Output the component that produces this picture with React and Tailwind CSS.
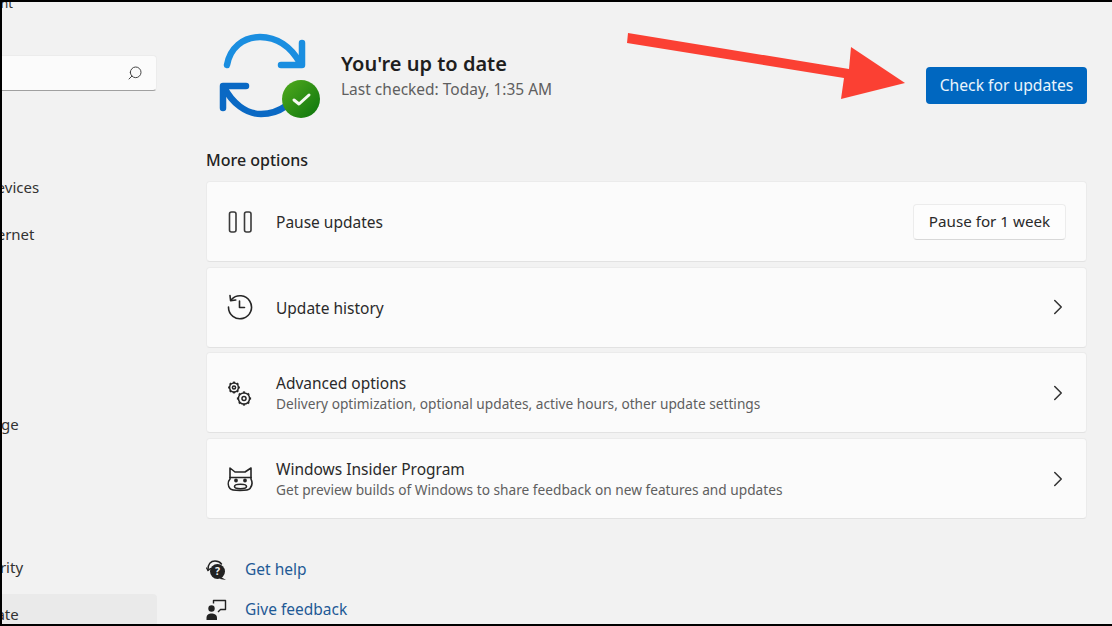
import { ChevronRight, Search } from "lucide-react";

const navItems = [
  "Bluetooth & devices",
  "Network & internet",
  "Personalization",
  "Apps",
  "Accounts",
  "Time & language",
  "Gaming",
  "Accessibility",
  "Privacy & security",
  "Windows Update",
];

const SyncIcon = () => (
  <svg width="104" height="90" viewBox="0 0 104 90" fill="none" className="shrink-0">
    <defs>
      <linearGradient id="green" x1="0" y1="0" x2="1" y2="1">
        <stop offset="0" stopColor="#52ab1e" />
        <stop offset="1" stopColor="#0b740c" />
      </linearGradient>
    </defs>
    <g stroke="#1a8ee0" strokeWidth="6.5" strokeLinecap="round" strokeLinejoin="round">
      <path d="M8 32 C11 15 24 4 41 4 C58 4 72 14 81 30" />
      <path d="M83 10 V32 H62" />
    </g>
    <g stroke="#0a69c4" strokeWidth="6.5" strokeLinecap="round" strokeLinejoin="round">
      <path d="M5 54 C13 70 27 81 42 81 C52 81 60 78 67 73" />
      <path d="M4 75 V53 H27" />
    </g>
    <circle cx="82" cy="66" r="19" fill="url(#green)" />
    <path d="M75 67 L80 71 L90 62" stroke="#f4f9f0" strokeWidth="3" strokeLinecap="round" strokeLinejoin="round" />
  </svg>
);

const PauseIcon = () => (
  <svg width="26" height="22" viewBox="0 0 26 22" fill="none" stroke="#3a3a3a" strokeWidth="1.6">
    <rect x="2.5" y="1" width="6.5" height="20" rx="2" />
    <rect x="17.5" y="1" width="6.5" height="20" rx="2" />
  </svg>
);

const HistoryIcon = () => (
  <svg width="26" height="26" viewBox="0 0 26 26" fill="none" stroke="#262626" strokeWidth="1.6" strokeLinecap="round" strokeLinejoin="round">
    <path d="M4.5 5.5 A11.5 11.5 0 1 1 1.5 13" />
    <path d="M3 1.5 L3.6 6.6 L8.8 6" />
    <path d="M12.5 7 V13.5 H17.5" />
  </svg>
);

const Gear = ({ cx, cy, r }) => (
  <g>
    <circle cx={cx} cy={cy} r={r} />
    <circle cx={cx} cy={cy} r={r * 0.36} />
    {[0, 45, 90, 135, 180, 225, 270, 315].map((a) => (
      <line
        key={a}
        x1={cx + r * Math.cos((a * Math.PI) / 180)}
        y1={cy + r * Math.sin((a * Math.PI) / 180)}
        x2={cx + (r + 1.5) * Math.cos((a * Math.PI) / 180)}
        y2={cy + (r + 1.5) * Math.sin((a * Math.PI) / 180)}
        strokeWidth="2.2"
      />
    ))}
  </g>
);

const GearsIcon = () => (
  <svg width="26" height="30" viewBox="0 0 26 30" fill="none" stroke="#262626" strokeWidth="1.5">
    <Gear cx={7} cy={9.5} r={4.4} />
    <Gear cx={17} cy={20.5} r={5.6} />
  </svg>
);

const CatIcon = () => (
  <svg width="26" height="26" viewBox="0 0 26 26" fill="none" stroke="#262626" strokeWidth="1.6" strokeLinejoin="round" strokeLinecap="round">
    <path d="M3 2 L8 6 H18 L24 2 V13 C25.5 16 25 20 23 22.5 C21 25 5 25 3 22.5 C1 20 0.5 16 3 13 Z" />
    <path d="M3 11.5 H24" />
    <circle cx="9" cy="14.5" r="1.1" fill="#262626" />
    <circle cx="18" cy="14.5" r="1.1" fill="#262626" />
    <path d="M7.5 20.5 C7.5 17.5 19.5 17.5 19.5 20.5 C19.5 23.5 7.5 23.5 7.5 20.5 Z" />
  </svg>
);

const HelpIcon = () => (
  <svg width="22" height="22" viewBox="0 0 22 22" fill="none">
    <path d="M2 11 C1.5 5 5 2 9 2 C11.5 2 14 3 15.5 5" stroke="#222" strokeWidth="1.4" strokeLinecap="round" />
    <path d="M0.5 9 L2 11.5 L4.5 9.5" stroke="#222" strokeWidth="1.2" strokeLinecap="round" />
    <circle cx="11.5" cy="12.5" r="7.5" fill="#222" />
    <path d="M15 18 L20 21 L14 20 Z" fill="#222" />
    <text x="11.5" y="16.2" textAnchor="middle" fontSize="10.5" fontWeight="700" fill="#f3f3f3" fontFamily="'Noto Sans', sans-serif">?</text>
  </svg>
);

const FeedbackIcon = () => (
  <svg width="22" height="24" viewBox="0 0 22 24" fill="none">
    <circle cx="5.5" cy="10.5" r="3.2" fill="#222" />
    <path d="M0.5 22 V20 C0.5 16.5 3 15.5 5.5 15.5 C8 15.5 11 16.5 11 20 V22 Z" fill="#222" />
    <path d="M7.5 5.5 V2.5 H19.5 V11.5 H14.5 L12 14" stroke="#222" strokeWidth="1.4" strokeLinejoin="round" />
  </svg>
);

const Card = ({ icon, title, sub, right }) => (
  <div className="flex h-[81px] items-center rounded-[4px] border border-[#ebebeb] border-b-[#e2e2e2] bg-[#fbfbfb] pl-[20px] pr-[20px]">
    <div className="flex w-[49px] shrink-0 items-center">{icon}</div>
    <div className="flex-1 pt-[2px]">
      <div className="text-[15.5px] leading-[21px] text-[#2a2a2a]">{title}</div>
      {sub && <div className="text-[13.7px] leading-[20px] text-[#5f5f5f]">{sub}</div>}
    </div>
    {right || <ChevronRight size={26} strokeWidth={1.4} color="#333" className="mr-[-5px]" />}
  </div>
);

const App = () => {
  return (
    <div className="relative flex h-[626px] w-[1112px] overflow-hidden border-y-2 border-l-2 border-black bg-[#f2f2f2] font-['Noto_Sans','Open_Sans',sans-serif]">
      <div className="w-[155px] shrink-0 overflow-hidden">
        <div className="mt-[-8px] ml-[-103px] w-[258px]">
          <div className="pr-[144px] text-right text-[13px] leading-[18px] text-[#333]">Local Account</div>
          <div className="mt-[43px] flex h-[36px] items-center justify-end rounded-[4px] border border-[#ececec] border-b-[#a0a0a0] bg-[#fbfbfb] pr-[13px]">
            <Search size={16} strokeWidth={1.5} color="#444" className="-scale-x-100" />
          </div>
          <div className="mt-[75px] flex flex-col gap-[5.5px]">
            {navItems.map((item) => (
              <div
                key={item}
                className={`flex h-[42px] shrink-0 items-center rounded-[4px] text-[15px] text-[#333] ${
                  item === "Windows Update" ? "bg-[#eaeaea]" : ""
                } ${item === "Personalization" ? "tracking-[-0.4px]" : ""}`}
              >
                {item}
              </div>
            ))}
          </div>
        </div>
      </div>

      <div className="flex-1 pl-[49px] pr-[25px]">
        <div className="flex h-[96px] items-start justify-between pt-[31px]">
          <div className="ml-[13px] flex items-start">
            <SyncIcon />
            <div className="ml-[18px] pt-[17px]">
              <div className="text-[20px] font-semibold leading-[28px] text-[#1e1e1e]">You're up to date</div>
              <div className="pt-[1px] text-[15.5px] leading-[21px] text-[#5f5f5f]">Last checked: Today, 1:35 AM</div>
            </div>
          </div>
          <button className="mt-[34px] flex h-[37px] w-[161px] items-center justify-center rounded-[4px] bg-[#0067c0] text-[15.7px] text-[#eaf4fc]">
            Check for updates
          </button>
        </div>

        <div className="mt-[51px] text-[16px] font-medium leading-[22px] text-[#222]">More options</div>

        <div className="mt-[10px] flex flex-col gap-[4.7px]">
          <Card
            icon={<PauseIcon />}
            title="Pause updates"
            right={
              <button className="flex h-[36px] w-[153px] items-center justify-center rounded-[4px] border border-[#ececec] border-b-[#d8d8d8] bg-[#fdfdfd] text-[15.2px] text-[#2a2a2a]">
                Pause for 1 week
              </button>
            }
          />
          <Card icon={<HistoryIcon />} title="Update history" />
          <Card
            icon={<GearsIcon />}
            title="Advanced options"
            sub="Delivery optimization, optional updates, active hours, other update settings"
          />
          <Card
            icon={<CatIcon />}
            title="Windows Insider Program"
            sub="Get preview builds of Windows to share feedback on new features and updates"
          />
        </div>

        <div className="mt-[40px] flex flex-col gap-[18px]">
          <div className="flex h-[22px] items-center gap-[17px]">
            <HelpIcon />
            <span className="text-[15.5px] text-[#1f5a96]">Get help</span>
          </div>
          <div className="flex h-[22px] items-center gap-[17px]">
            <FeedbackIcon />
            <span className="text-[15.5px] text-[#1f5a96]">Give feedback</span>
          </div>
        </div>
      </div>

      {/* annotation arrow */}
      <svg width="290" height="80" viewBox="0 0 290 80" className="absolute left-[623px] top-[29px]">
        <path d="M3 2 L224 38 L226 16 L280 52 L216 68 L219 47 L2 12 Z" fill="#fb4033" />
      </svg>
    </div>
  );
};

export default App;
